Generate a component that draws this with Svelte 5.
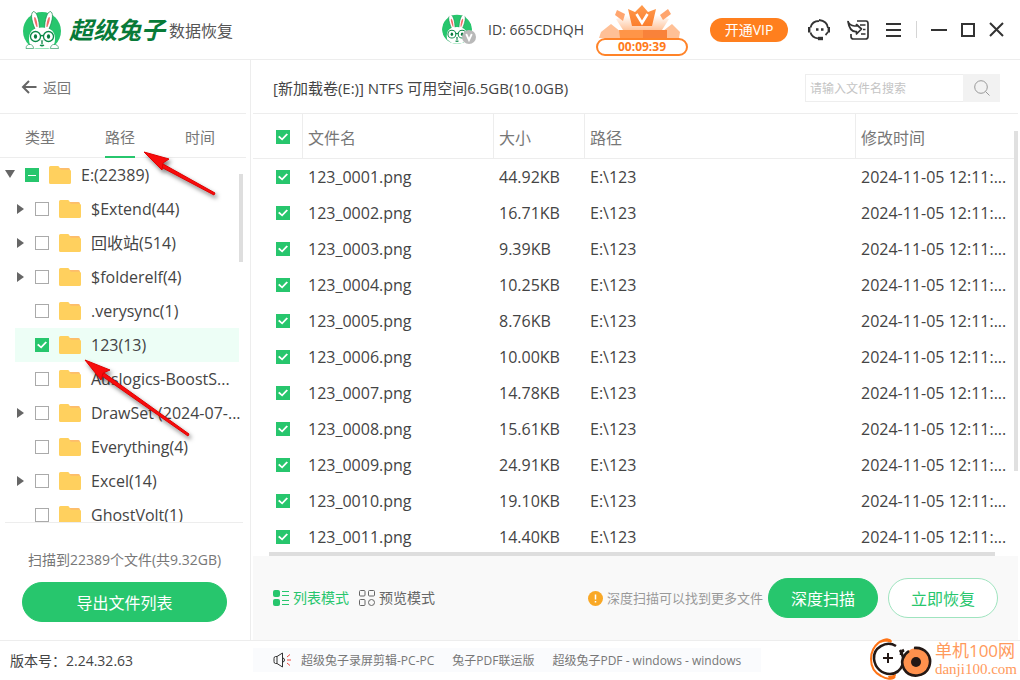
<script>
	const tabs = ['类型', '路径', '时间'];
	let activeTab = $state('路径');
	let keyword = $state('');

	let nodes = $state([
		{ name: '$Extend(44)', open: true, checked: false },
		{ name: '回收站(514)', open: true, checked: false },
		{ name: '$folderelf(4)', open: true, checked: false },
		{ name: '.verysync(1)', open: false, checked: false },
		{ name: '123(13)', open: false, checked: true },
		{ name: 'Auslogics-BoostS...', open: false, checked: false },
		{ name: 'DrawSet (2024-07-...', open: true, checked: false },
		{ name: 'Everything(4)', open: false, checked: false },
		{ name: 'Excel(14)', open: true, checked: false },
		{ name: 'GhostVolt(1)', open: false, checked: false }
	]);

	const sizes = ['44.92', '16.71', '9.39', '10.25', '8.76', '10.00', '14.78', '15.61', '24.91', '19.10', '14.40'];
	let files = $state(
		sizes.map((size, i) => ({
			name: `123_${String(i + 1).padStart(4, '0')}.png`,
			size: `${size}KB`,
			path: 'E:\\123',
			time: '2024-11-05 12:11:...',
			checked: true
		}))
	);

	let allChecked = $derived(files.every((f) => f.checked));
	function toggleAll(e) {
		for (const f of files) f.checked = e.currentTarget.checked;
	}
</script>

{#snippet folder()}
	<svg class="folder" viewBox="0 0 22 18" aria-hidden="true">
		<path d="M10 2h9.500a1.500 1.500 0 0 1 1.500 1.500V8H10z" fill="#fdbd6c" />
		<path d="M0 1.500A1.500 1.500 0 0 1 1.500 0h7.200c.8 0 1.200.4 1.600 1l.8 1.800c.3.700.7 1 1.500 1H20.500A1.500 1.500 0 0 1 22 5.300V16.500a1.500 1.500 0 0 1-1.500 1.500h-19A1.500 1.500 0 0 1 0 16.500z" fill="#ffd05e" />
	</svg>
{/snippet}

{#snippet rabbit()}
	<circle cx="19" cy="20" r="19" fill="#27c66d" />
	<g fill="#fff" stroke="#0b8a48" stroke-width=".7">
		<path d="M13 20C9 12 7 3 10 .8c3-1.600 6.500 7 6.500 18z" />
		<path d="M25 20c4-8 6-17 3-19.200-3-1.600-6.500 7-6.500 18z" />
		<path d="M6 28c0-8 5-11.500 13-11.500S32 20 32 28c0 5-2 8-5 9.500H11C8 36 6 33 6 28z" stroke="none" />
	</g>
	<path d="M13.600 16C11.500 11 10.600 7 11.500 6c1.300-.6 3 5 3.100 10zM24.400 16c2.100-5 3-9 2.100-10-1.300-.6-3 5-3.100 10z" fill="#f46a6a" />
	<path d="M3 37.500c0-3 2-4.500 4.500-4 2 .3 3 2 3 4zM27.500 37.500c0-2 1-3.700 3-4 2.500-.5 5 1 5 4z" fill="#fff" stroke="#0b8a48" stroke-width=".6" />
	<g fill="#fff" stroke="#0b8a48" stroke-width="1.300">
		<circle cx="12.500" cy="25.500" r="5" />
		<circle cx="25.500" cy="25.500" r="5" />
		<path d="M17.500 25q1.500-1 3 0M19 30.500v3M17 34q2 1.500 4 0" fill="none" />
	</g>
	<ellipse cx="12.500" cy="25.500" rx="1.600" ry="2.200" fill="#087a3e" />
	<ellipse cx="25.500" cy="25.500" rx="1.600" ry="2.200" fill="#087a3e" />
	<path d="M17.500 29.500h3L19 31z" fill="#087a3e" />
{/snippet}

<div class="window">
	<header class="topbar">
		<div class="brand">
			<svg class="logo" viewBox="0 0 38 38" aria-hidden="true">{@render rabbit()}</svg>
			<span class="brand-name">超级兔子</span>
			<span class="brand-sub">数据恢复</span>
		</div>

		<div class="account">
			<svg class="avatar" viewBox="0 0 36 32" aria-hidden="true">
				<defs><clipPath id="avatar-clip"><circle cx="15" cy="15" r="15" /></clipPath></defs>
				<g clip-path="url(#avatar-clip)"><g transform="scale(.79)">{@render rabbit()}</g></g>
				<circle cx="27" cy="23" r="7" fill="#b9b9b9" />
				<path d="M24.200 20l2.800 6 2.800-6" fill="none" stroke="#fff" stroke-width="1.800" />
			</svg>
			<span class="user-id">ID: 665CDHQH</span>
		</div>

		<div class="promo">
			<svg class="promo-art" viewBox="0 0 92 34" aria-hidden="true">
				<defs>
					<linearGradient id="crown" x1="0" y1="0" x2="0" y2="1"><stop offset="0" stop-color="#ff9c4f" /><stop offset="1" stop-color="#fb7d2c" /></linearGradient>
					<linearGradient id="glow" x1="0" y1="0" x2="0" y2="1"><stop offset="0" stop-color="#fff" /><stop offset="1" stop-color="#ffc49c" /></linearGradient>
				</defs>
				<path d="M20 15l12-4h28l13 4-7 11H27z" fill="url(#glow)" />
				<path d="M15 20l10 8v6H3l2-6z" fill="#ffc096" />
				<path d="M76 20l8 8-1 6H70l-3-7z" fill="#ffc096" />
				<path d="M21 6l8 4-2 7-8-6zM72 5l3 5-8 6-3-5z" fill="#ffa56e" />
				<path d="M32 5l7 3 7-7 6 7 8-3-4 17H36z" fill="url(#crown)" />
				<path d="M40.500 10l5.500 9 5.500-9" fill="none" stroke="#fff" stroke-width="2.600" />
				<path d="M23 26h48v8H24z" fill="#ff9548" />
				<path d="M47 26h24v8H47z" fill="#f9823a" />
			</svg>
			<span class="countdown">00:09:39</span>
		</div>

		<button class="vip">开通VIP</button>

		<nav class="tools">
			<button class="icon-btn" aria-label="客服">
				<svg width="22" height="22" viewBox="0 0 22 22" fill="none" stroke="#333" stroke-width="1.800">
					<path d="M2.500 8.500C3.500 4.500 7 2 11 2M11 1c5 .5 8.500 3.500 9 8M2.500 13.500c1 3.800 4 5.500 7.500 5.800M20 13c-.8 1-1.500 2-2.500 3" />
					<path d="M1.200 8v5.500M20.800 8v5.500" stroke-width="2.400" />
					<path d="M10 19.500h5" stroke-width="3.400" />
					<path d="M8 10.500h2.500M13 10.500h2.500" stroke-width="2.500" />
				</svg>
			</button>
			<button class="icon-btn" aria-label="反馈">
				<svg width="22" height="20" viewBox="0 0 22 20" fill="none" stroke="#333" stroke-width="1.700">
					<path d="M10 1h9q2 0 2 2.500v13q0 2.500-2.500 2.500h-12Q4 19 4 16.500V14" />
					<path d="M1 1.500c1 2.500 3 4 6.500 4.500h2V4.500l5 4.500-5 5v-2.500C5 12 2 8 1 1.500z" stroke-linejoin="round" />
					<path d="M13 5h5.500M16 9.500h2.500M14 14h4.500" stroke-width="1.500" />
				</svg>
			</button>
			<button class="icon-btn" aria-label="菜单">
				<svg width="16" height="16" viewBox="0 0 16 16" stroke="#333" stroke-width="2"><path d="M0 2h15M0 8h15M0 14h15" /></svg>
			</button>
		</nav>
		<nav class="window-controls">
			<button class="icon-btn" aria-label="最小化">
				<svg width="16" height="16" viewBox="0 0 16 16" stroke="#333" stroke-width="2"><path d="M0 8h16" /></svg>
			</button>
			<button class="icon-btn" aria-label="最大化">
				<svg width="14" height="14" viewBox="0 0 14 14" fill="none" stroke="#333" stroke-width="2"><path d="M1 1h12v12H1z" /></svg>
			</button>
			<button class="icon-btn" aria-label="关闭">
				<svg width="15" height="15" viewBox="0 0 15 15" stroke="#333" stroke-width="2"><path d="M1 1l13 13M14 1L1 14" /></svg>
			</button>
		</nav>
	</header>

	<div class="body">
		<aside class="sidebar">
			<div class="back-row">
				<button class="back">
					<svg width="16" height="14" viewBox="0 0 16 14" fill="none" stroke="#666" stroke-width="2"><path d="M15.500 7H1.500M8 1L2 7l6 6" /></svg>
					返回
				</button>
			</div>
			<div class="tabs" role="tablist">
				{#each tabs as tab (tab)}
					<button class="tab" class:active={tab === activeTab} role="tab" aria-selected={tab === activeTab} onclick={() => (activeTab = tab)}>{tab}</button>
				{/each}
			</div>

			<div class="tree">
				<div class="node root">
					<span class="caret down"></span>
					<label><input type="checkbox" indeterminate={true} />{@render folder()}<span>E:(22389)</span></label>
				</div>
				{#each nodes as node (node.name)}
					<div class="node" class:selected={node.checked}>
						<span class="caret" class:right={node.open}></span>
						<label><input type="checkbox" bind:checked={node.checked} />{@render folder()}<span>{node.name}</span></label>
					</div>
				{/each}
				<div class="tree-scroll"></div>
			</div>

			<div class="summary">
				<p>扫描到22389个文件(共9.32GB)</p>
				<button class="btn solid wide">导出文件列表</button>
			</div>

			<!-- pointer annotations over the tree -->
			<svg class="arrows" viewBox="0 0 250 400" aria-hidden="true">
				<g class="arrow"><path d="M163 104l52 29-1 2-53-28z" /><path d="M144 92l25 7-6 4-1 7z" /></g>
				<g class="arrow"><path d="M104 313l85 61-1 2-86-60z" /><path d="M85 300l25 10-7 3-2 7z" /></g>
			</svg>
		</aside>

		<main class="content">
			<div class="title-row">
				<h1>[新加载卷(E:)] NTFS 可用空间6.5GB(10.0GB)</h1>
				<form class="search" onsubmit={(e) => e.preventDefault()}>
					<input type="text" aria-label="搜索" placeholder="请输入文件名搜索" bind:value={keyword} />
					<button aria-label="搜索">
						<svg width="16" height="16" viewBox="0 0 16 16" fill="none" stroke="#999"><circle cx="7" cy="7" r="6.300" /><path d="M11.500 11.500l4 4" /></svg>
					</button>
				</form>
			</div>

			<div class="list">
				<table>
					<colgroup><col class="c-check" /><col class="c-name" /><col class="c-size" /><col class="c-path" /><col /></colgroup>
					<thead>
						<tr>
							<th><input type="checkbox" aria-label="全选" checked={allChecked} onchange={toggleAll} /></th>
							<th>文件名</th>
							<th>大小</th>
							<th>路径</th>
							<th>修改时间</th>
						</tr>
					</thead>
					<tbody>
						{#each files as file (file.name)}
							<tr>
								<td><input type="checkbox" aria-label={file.name} bind:checked={file.checked} /></td>
								<td>{file.name}</td>
								<td>{file.size}</td>
								<td>{file.path}</td>
								<td>{file.time}</td>
							</tr>
						{/each}
					</tbody>
				</table>
				<div class="scroll-v"></div>
				<div class="scroll-h"></div>
			</div>

			<div class="actions">
				<button class="mode active">
					<svg width="16" height="16" viewBox="0 0 16 16"><rect width="7" height="7" rx="2" fill="#27c66d" /><rect y="9" width="7" height="7" rx="2" fill="#27c66d" /><path d="M9 1.500h7M9 5.500h7M9 10.500h7M9 14.500h7" stroke="#27c66d" /></svg>
					列表模式
				</button>
				<button class="mode">
					<svg width="16" height="16" viewBox="0 0 16 16" fill="none" stroke="#666"><rect x=".5" y=".5" width="5.500" height="5.500" rx="1" /><rect x="9.500" y=".5" width="6" height="5.500" rx="1" /><rect x=".5" y="9.500" width="5.500" height="6" rx="1" /><circle cx="12.500" cy="12.500" r="3" /></svg>
					预览模式
				</button>
				<div class="tip">
					<svg width="15" height="15" viewBox="0 0 15 15"><circle cx="7.500" cy="7.500" r="7.500" fill="#f9a826" /><path d="M7.500 3.500v5M7.500 10v1.500" stroke="#fff" stroke-width="1.500" /></svg>
					深度扫描可以找到更多文件
				</div>
				<button class="btn solid">深度扫描</button>
				<button class="btn outline">立即恢复</button>
			</div>
		</main>
	</div>

	<footer class="statusbar">
		<span class="version">版本号：2.24.32.63</span>
		<div class="news">
			<svg width="18" height="16" viewBox="0 0 18 16" fill="none" stroke="#333"><path d="M4 4.500L9.500 1v14L4 11.500zM4 4.500H2.500Q1 4.500 1 6.500v3q0 2 1.500 2H4M9.500 6q2 0 2 2t-2 2" /><path d="M14 5l3-2.500M14 8h4M14 11l3 2.500" stroke="#f0483e" /></svg>
			<a href="#pc">超级兔子录屏剪辑-PC-PC</a>
			<a href="#union">兔子PDF联运版</a>
			<a href="#pdf">超级兔子PDF - windows - windows</a>
		</div>
	</footer>

	<div class="watermark">
		<svg width="64" height="42" viewBox="0 0 64 42" fill="none" aria-hidden="true">
			<path d="M22 3C15-2 2 7 2 21c0 8 4 14 10 17 5 3 11 4 14 1" stroke="#ff7416" stroke-width="2" />
			<path d="M11 5c4-5 9-6 12-2l-1 2c-4-2-7-1-11 0zM19 38c3 0 5-1 8-2 0 4-3 6-7 5z" fill="#ff7416" />
			<path d="M27 8C17 2 4 10 5 21c1 9 8 15 16 15 7 0 11-5 13-10 1-4 0-9-3-14" stroke="#231815" stroke-width="2.600" />
			<circle cx="48" cy="24" r="14" fill="#ff914d" />
			<path d="M32 17c0-2 1-4 3-5M40 13c-6 4-9 11-5 18 6 10 21 8 25-2 4-11-4-20-15-19" stroke="#231815" stroke-width="2.600" />
			<circle cx="47" cy="24" r="5" fill="#231815" />
			<path d="M14 20h10M19 15v10" stroke="#231815" stroke-width="2" />
		</svg>
		<div class="wm-text"><span>单机100网</span><small>danji100.com</small></div>
	</div>
</div>

<style>
	:global(body) { margin: 0; }
	.window {
		--green: #27c66d;
		--line: #ededed;
		position: relative; height: 100vh; overflow: hidden;
		display: flex; flex-direction: column;
		background: #fff; color: #444;
		font-family: "Open Sans", "Noto Sans CJK SC", sans-serif; font-size: 15px;
	}
	.window *, .window *::before { box-sizing: border-box; }
	button {
		padding: 0; border: 0; background: none; color: inherit;
		font-family: inherit; cursor: pointer;
	}
	svg { display: block; flex: none; }

	.topbar {
		display: flex; align-items: center; flex: none;
		height: 60px; padding-right: 16px; border-bottom: 1px solid var(--line);
	}
	.brand { display: flex; align-items: center; margin-right: auto; padding-left: 23px; }
	.logo { width: 38px; height: 38px; }
	.brand-name { margin: 0 4px 0 8px; font-size: 24px; font-weight: 700; font-style: italic; line-height: 28px; color: #087a38; }
	.brand-sub { font-size: 16px; color: #555; }
	.account { display: flex; align-items: center; gap: 10px; }
	.avatar { width: 36px; height: 32px; }
	.user-id { font-size: 14px; }
	.promo { width: 92px; margin: 0 22px 0 12px; }
	.promo-art { width: 92px; height: 34px; }
	.countdown {
		display: block; height: 18px; border: 2px solid #ff8328; border-radius: 9px;
		background: #fff; color: #ff7a1a;
		font-size: 12px; font-weight: 700; line-height: 14px; text-align: center;
	}
	.vip {
		width: 78px; height: 24px; margin-right: 20px; border-radius: 12px;
		background: #ff7f1e; color: #fff; font-size: 14px; line-height: 24px;
	}
	.tools { display: flex; align-items: center; gap: 17px; padding-right: 14px; }
	.window-controls { display: flex; align-items: center; gap: 14px; height: 17px; padding-left: 14px; border-left: 1px solid #d5d5d5; }

	.body { display: flex; flex: 1; min-height: 0; }
	.sidebar {
		position: relative; display: flex; flex-direction: column; flex: none;
		width: 251px; border-right: 1px solid var(--line);
	}
	.back-row { display: flex; height: 54px; margin-right: 4px; border-bottom: 1px solid var(--line); }
	.back { display: flex; align-items: center; gap: 6px; padding-left: 21px; font-size: 14px; color: #777; }
	.tabs { display: flex; justify-content: space-around; height: 44px; margin-right: 4px; padding-right: 6px; border-bottom: 1px solid var(--line); }
	.tab { height: 44px; padding-top: 2px; border-bottom: 2px solid transparent; font-size: 15px; color: #777; }
	.tab.active { border-color: var(--green); }

	.tree { position: relative; flex: 1; min-height: 0; margin: 0 7px 0 5px; overflow: hidden; border-bottom: 1px solid var(--line); }
	.node { display: flex; align-items: center; height: 34px; margin: 0 4px 0 10px; }
	.node.root { margin-left: 0; }
	.node.selected { background: #edfef6; }
	.node label { display: flex; align-items: center; white-space: nowrap; font-size: 16px; line-height: 22px; }
	.folder { width: 22px; height: 18px; margin: 0 10px; }
	.caret { flex: none; width: 20px; height: 12px; }
	.caret::before { content: ''; display: block; background: #666; }
	.caret.right::before { width: 7px; height: 10px; margin: 1px 2px; clip-path: polygon(0 0, 100% 50%, 0 100%); }
	.caret.down::before { width: 10px; height: 8px; margin-top: 1px; clip-path: polygon(0 0, 100% 0, 50% 100%); }
	.tree-scroll { position: absolute; top: 16px; right: 0; width: 4px; height: 88px; background: #dedede; }

	input[type='checkbox'] {
		appearance: none; display: grid; place-content: center; flex: none;
		width: 14px; height: 14px; margin: 0; border: 1px solid #aaa; background: #fff;
	}
	input[type='checkbox']:checked, input[type='checkbox']:indeterminate { border-color: var(--green); background: var(--green); }
	input[type='checkbox']:checked::before {
		content: ''; width: 10px; height: 8px; background: #fff;
		clip-path: polygon(0 50%, 15% 35%, 40% 65%, 85% 5%, 100% 20%, 42% 95%);
	}
	input[type='checkbox']:indeterminate::before { content: ''; width: 8px; height: 1px; background: #fff; }

	.summary { display: flex; flex-direction: column; gap: 11px; padding: 26px 23px 18px 22px; }
	.summary p { margin: 0; font-size: 14px; line-height: 22px; text-align: center; color: #777; }
	.btn { width: 110px; height: 40px; border: 1px solid var(--green); border-radius: 20px; font-size: 16px; }
	.btn.solid { background: var(--green); color: #fff; }
	.btn.outline { border-color: #9fe4bf; background: #fff; color: var(--green); }
	.btn.wide { width: 100%; }

	.arrows { position: absolute; left: 0; top: 0; width: 250px; height: 400px; pointer-events: none; }
	.arrow { fill: #f80c0c; stroke: #e00000; stroke-width: 1; filter: drop-shadow(2px 3px 2px rgba(0, 0, 0, 0.5)); }

	.content { display: flex; flex-direction: column; flex: 1; min-width: 0; margin: 0 2px; }
	.title-row {
		display: flex; align-items: center; justify-content: space-between;
		height: 54px; padding: 2px 18px 0 20px; border-bottom: 1px solid var(--line);
	}
	h1 { margin: 0; font-size: 15px; font-weight: 400; line-height: 24px; }
	.search { display: flex; width: 195px; height: 28px; }
	.search input {
		flex: 1; min-width: 0; padding: 2px 4px 0; border: 1px solid #eee; border-right: 0; outline: 0;
		font-family: inherit; font-size: 12px;
	}
	.search input::placeholder { color: #c4c4c4; }
	.search button { display: grid; place-content: center; width: 37px; background: #f2f2f2; }

	.list { position: relative; flex: 1; min-height: 0; overflow: hidden; }
	table { width: 100%; table-layout: fixed; border-collapse: separate; border-spacing: 0; }
	.c-check { width: 49px; }
	.c-name { width: 191px; }
	.c-size { width: 91px; }
	.c-path { width: 271px; }
	th, td { padding: 0 0 0 6px; text-align: left; white-space: nowrap; font-size: 16px; }
	th { height: 45px; padding-top: 2px; border-bottom: 1px solid var(--line); font-weight: 400; color: #777; }
	th + th { border-left: 1px solid var(--line); padding-left: 5px; }
	td { height: 36px; }
	th:first-child, td:first-child { padding-left: 23px; }
	.scroll-v { position: absolute; top: 17px; right: 0; width: 4px; height: 340px; background: #e0e0e0; }
	.scroll-h { position: absolute; left: 16px; right: 23px; bottom: 0; height: 4px; background: #dedede; }

	.actions { display: flex; align-items: center; gap: 10px; flex: none; height: 84px; padding: 0 20px; background: #f9f9f9; }
	.mode, .tip { display: flex; align-items: center; gap: 4px; white-space: nowrap; font-size: 14px; line-height: 18px; color: #666; }
	.mode.active { color: var(--green); }
	.tip { margin: 0 -5px 0 auto; font-size: 13px; color: #999; }

	.statusbar { display: flex; align-items: center; flex: none; height: 40px; padding-bottom: 2px; border-top: 1px solid var(--line); }
	.version { width: 253px; padding-left: 10px; font-size: 14px; }
	.news { display: flex; align-items: center; gap: 18px; height: 24px; padding: 0 20px; background: #fafbfd; font-size: 12px; }
	.news svg { margin-right: -8px; }
	.news a { color: #777; text-decoration: none; white-space: nowrap; }

	.watermark { position: absolute; right: 3px; bottom: 0; display: flex; align-items: center; gap: 2px; }
	.wm-text { display: flex; flex-direction: column; color: #ff9a5c; white-space: nowrap; }
	.wm-text span { font-size: 17px; line-height: 20px; }
	.wm-text small { font-family: "Liberation Serif", serif; font-size: 15px; line-height: 16px; }
</style>
